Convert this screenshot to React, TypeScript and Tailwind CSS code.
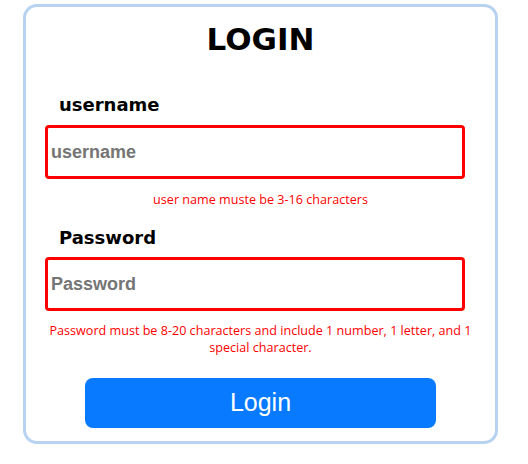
import React from 'react';

const App = () => {
  return (
    <div className="min-h-[464px] w-[528px] bg-white pl-[23px] pt-[4px]">
      <form
        className="flex h-[440px] w-[475px] flex-col rounded-[14px] border-[3px] border-[#b7d3f1] bg-white pt-[14px]"
        onSubmit={(e) => e.preventDefault()}
      >
        <h2 className="text-center font-['DejaVu_Sans',sans-serif] text-[31px] font-bold leading-[36px] text-black">LOGIN</h2>

        <label htmlFor="username" className="mt-[37px] ml-[33px] font-['DejaVu_Sans',sans-serif] text-[18px] font-bold leading-[22px] text-black">
          username
        </label>
        <input
          id="username"
          type="text"
          placeholder="username"
          className="mt-[9px] ml-[19px] h-[54px] w-[420px] rounded-[4px] border-[3px] border-[#ff0000] px-[3px] font-['Liberation_Sans',Arial,sans-serif] text-[18px] font-bold text-[#333] outline-none placeholder:text-[#757575]"
        />
        <p className="mt-[12px] text-center font-['Open_Sans',sans-serif] text-[12.6px] leading-[17px] text-[#ff0000]">
          user name muste be 3-16 characters
        </p>

        <label htmlFor="password" className="mt-[19px] ml-[33px] font-['DejaVu_Sans',sans-serif] text-[18px] font-bold leading-[22px] text-black">
          Password
        </label>
        <input
          id="password"
          type="password"
          placeholder="Password"
          className="mt-[8px] ml-[19px] h-[54px] w-[420px] rounded-[4px] border-[3px] border-[#ff0000] px-[3px] font-['Liberation_Sans',Arial,sans-serif] text-[18px] font-bold text-[#333] outline-none placeholder:text-[#757575]"
        />
        <p className="mt-[11px] text-center font-['Open_Sans',sans-serif] text-[12.6px] leading-[17px] text-[#ff0000]">
          Password must be 8-20 characters and include 1 number, 1 letter, and 1
          <br />
          special character.
        </p>

        <button
          type="submit"
          className="mx-auto mt-[22px] flex h-[50px] w-[351px] items-center justify-center rounded-[8px] bg-[#077aff] font-['Liberation_Sans',Arial,sans-serif] text-[25px] text-white"
        >
          Login
        </button>
      </form>
    </div>
  );
};

export default App;
